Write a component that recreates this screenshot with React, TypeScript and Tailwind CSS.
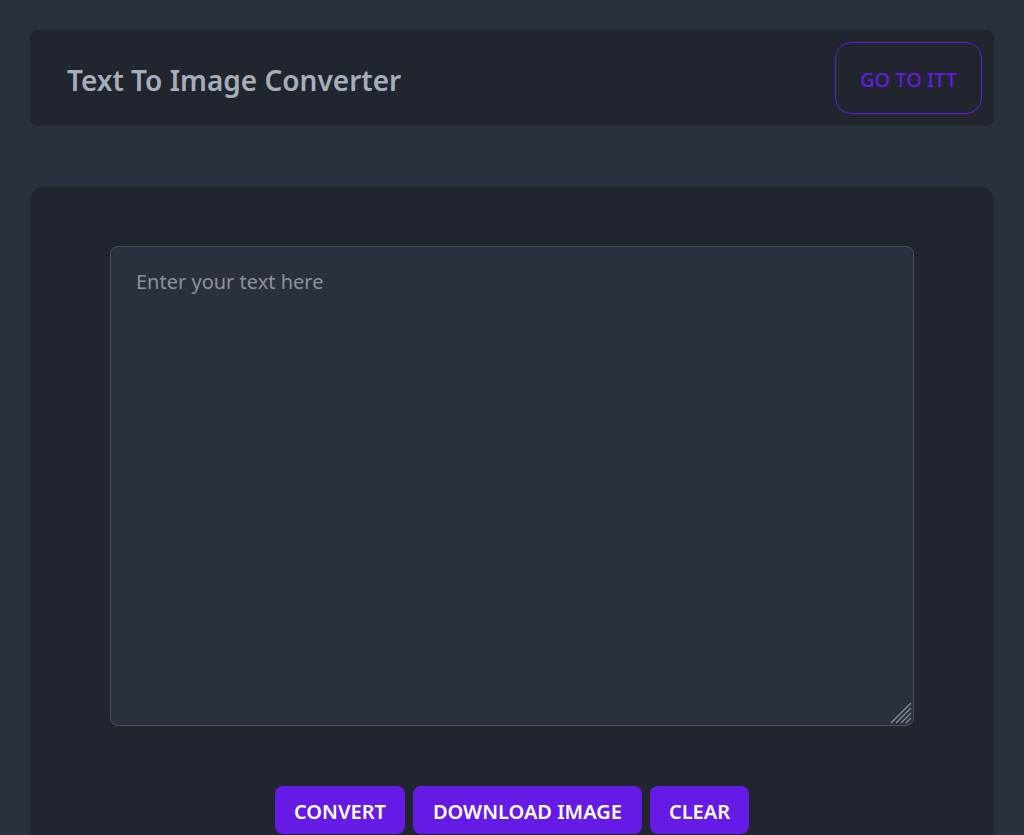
export default function App() {
  return (
    <div
      className="min-h-screen bg-[#2a303c] px-[30px] pt-[30px] pb-10 text-[#a6adbb]"
      style={{ fontFamily: '"Noto Sans", "Open Sans", sans-serif' }}
    >
      <header className="flex h-[96px] items-center justify-between rounded-lg bg-[#20252e] pl-[37px] pr-3">
        <h1 className="pt-[3px] text-[28px] font-semibold">Text To Image Converter</h1>
        <button className="flex h-[72px] items-center rounded-2xl border border-[#661ae6] px-6 pt-1 text-xl font-medium text-[#661ae6]">
          GO TO ITT
        </button>
      </header>

      <main className="mt-[60px] rounded-2xl bg-[#20252e] px-20 pt-[60px] pb-16">
        <div className="relative">
          <textarea
            placeholder="Enter your text here"
            className="block h-[480px] w-full resize-none rounded-lg border border-[#4b515c] bg-[#2a303c] px-[25px] pt-[21px] pb-4 text-xl text-[#a6adbb] outline-none placeholder:text-[#8c929e]"
          />
          <svg className="pointer-events-none absolute right-[2px] bottom-[2px]" width="22" height="22" viewBox="0 0 22 22">
            <g stroke="#8a8f99" strokeWidth="1.2">
              <line x1="1" y1="21" x2="21" y2="1" />
              <line x1="6" y1="21" x2="21" y2="6" />
              <line x1="11" y1="21" x2="21" y2="11" />
              <line x1="16" y1="21" x2="21" y2="16" />
            </g>
          </svg>
        </div>
        <div className="mt-[60px] flex justify-center gap-2">
          <button className="h-12 rounded-lg bg-[#661ae6] px-[19px] pt-[3px] text-xl font-semibold text-white">CONVERT</button>
          <button className="h-12 rounded-lg bg-[#661ae6] px-[20px] pt-[3px] text-xl font-semibold text-white">DOWNLOAD IMAGE</button>
          <button className="h-12 rounded-lg bg-[#661ae6] px-[19px] pt-[3px] text-xl font-semibold text-white">CLEAR</button>
        </div>
      </main>
    </div>
  )
}
